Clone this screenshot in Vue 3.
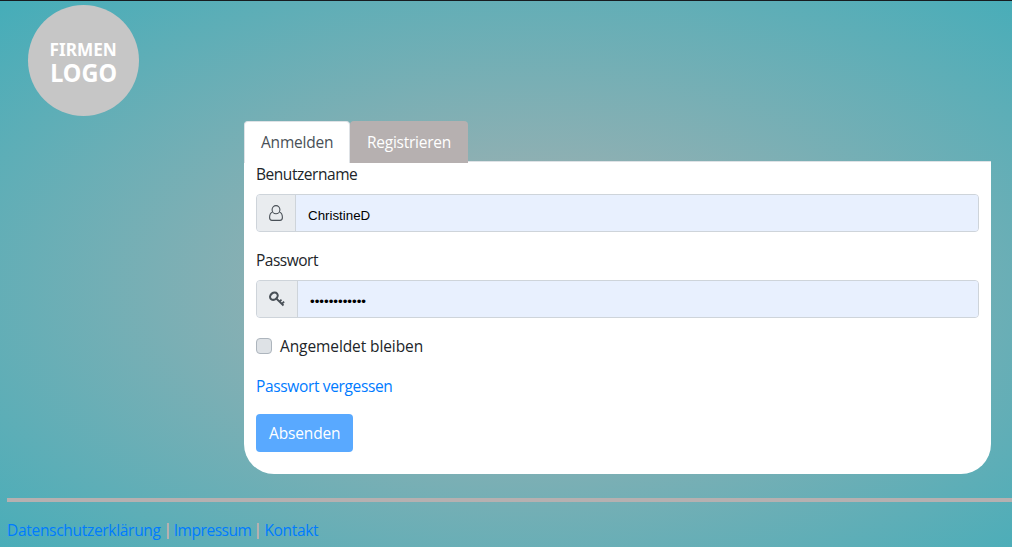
<script setup>
import { ref } from 'vue'

const username = ref('ChristineD')
const password = ref('geheim123456')
const stay = ref(false)
</script>

<template>
  <div class="page">
    <header>
      <div class="logo">
        <span class="logo-top">FIRMEN</span>
        <span class="logo-bottom">LOGO</span>
      </div>
    </header>
    <main>
      <nav class="tabs">
        <a class="tab active"><span class="t-anm">Anmelden</span></a>
        <a class="tab other"><span class="t-reg">Registrieren</span></a>
      </nav>
      <form class="card" @submit.prevent>
        <label class="t-user" for="user">Benutzername</label>
        <div class="group">
          <span class="addon user">
            <svg width="14" height="16" viewBox="0 0 14 16" fill="none" stroke="#495057" stroke-width="1.1">
              <path d="M3.300 7.200C1.400 7.800.6 10 .6 12.600c0 1.600 1 2.800 2.400 2.800h8c1.400 0 2.400-1.200 2.400-2.800 0-2.600-.8-4.800-2.700-5.400" />
              <ellipse cx="7" cy="4.700" rx="3.900" ry="4.100" />
            </svg>
          </span>
          <input id="user" v-model="username" type="text" />
        </div>
        <label class="t-pass" for="pass">Passwort</label>
        <div class="group">
          <span class="addon key">
            <svg width="16" height="16" viewBox="0 0 16 16" fill="none" stroke="#495057">
              <ellipse cx="4.900" cy="5.200" rx="4.100" ry="3.300" stroke-width="2.100" transform="rotate(-40 4.900 5.200)" />
              <path d="M7.300 7.500l7.200 7M10.300 10.800l2.200-2.200M12.600 13.100l2.500-2.500" stroke-width="1.800" />
            </svg>
          </span>
          <input id="pass" v-model="password" class="secret" type="password" />
        </div>
        <label class="check">
          <input v-model="stay" type="checkbox" />
          <span class="t-stay">Angemeldet bleiben</span>
        </label>
        <a class="forgot"><span class="t-forgot">Passwort vergessen</span></a>
        <button type="submit"><span class="t-send">Absenden</span></button>
      </form>
    </main>
    <footer>
      <a class="t-data">Datenschutzerklärung</a><i></i><a class="t-imp">Impressum</a><i></i><a class="t-kon">Kontakt</a>
    </footer>
  </div>
</template>

<style>
body { margin: 0; overflow: hidden; }
</style>

<style scoped>
* { box-sizing: border-box; }
.page {
  height: 547px;
  overflow: hidden;
  border-top: 1px solid #171c20;
  background: radial-gradient(ellipse at 52% 52%, #aeb1b0 0%, #45adb9 100%);
  font: 15.5px/24px "Open Sans", "Noto Sans", sans-serif;
  color: #212529;
}
header { height: 120px; padding: 4px 0 0 28px; }
.logo {
  width: 111px;
  height: 111px;
  border-radius: 50%;
  background: #c6c6c6;
  color: #fff;
  font-family: "Noto Sans", sans-serif;
  font-weight: 700;
  display: flex;
  flex-direction: column;
  align-items: center;
  padding-top: 33px;
}
.logo span { white-space: nowrap; }
.logo-top { font-size: 18.500px; line-height: 21px; transform: scaleX(.93); }
.logo-bottom { font-size: 25px; line-height: 27px; transform: scaleX(.94); }
main { width: 747px; margin-left: 244px; }
.tabs { display: flex; height: 42px; position: relative; z-index: 1; }
.tab {
  height: 42px;
  padding: 9px 0 0 17px;
  border-radius: 4px 4px 0 0;
}
.active { width: 106px; background: #fff; color: #495057; border: 1px solid #dee2e6; border-bottom: 0; padding: 8px 0 0 16px; }
.other { width: 118px; background: #b6b0b0; color: #fff; }
.card {
  height: 313px;
  margin-top: -2px;
  padding: 0 12px;
  background: #fff;
  border-top: 1px solid #dee2e6;
  border-radius: 0 0 30px 30px;
  display: flex;
  flex-direction: column;
  align-items: flex-start;
}
.card > label { white-space: nowrap; }
.group {
  display: flex;
  width: 723px;
  height: 38px;
  margin: 8px 0 16px;
  border: 1px solid #ced4da;
  border-radius: 4px;
  overflow: hidden;
  background: #e8f0fe;
}
.addon {
  display: flex;
  align-items: center;
  padding-left: 12px;
  background: #e9ecef;
  border-right: 1px solid #ced4da;
}
.addon svg { display: block; }
.user { width: 39px; }
.key { width: 41px; }
.group input {
  flex: 1;
  border: 0;
  outline: 0;
  padding: 5px 12px 0;
  background: #e8f0fe;
  color: #000;
  font: 13.333px "Liberation Sans", Arial, sans-serif;
}
.group .secret { padding-top: 4px; }
.check { display: flex; align-items: center; gap: 8px; }
.check input {
  appearance: none;
  width: 16px;
  height: 16px;
  margin: 0;
  border: 1px solid #adb5bd;
  border-radius: 4px;
  background: #dee2e6;
}
.forgot { margin-top: 16px; color: #007bff; }
button {
  width: 97px;
  height: 38px;
  margin-top: 16px;
  padding: 0 0 0 13px;
  border: 0;
  border-radius: 4px;
  background: #59a9ff;
  color: #fff;
  font: inherit;
  text-align: left;
}
footer {
  margin: 24px 0 0 7px;
  padding-top: 16px;
  border-top: 4px solid #b6b0b0;
  display: flex;
  align-items: center;
  color: #007bff;
}
footer i { width: 2px; height: 16px; margin: 2px 5px 0 6px; background: #b6b0b0; }
.t-anm { letter-spacing: -.2px; }
.t-reg { letter-spacing: -.25px; }
.t-user { letter-spacing: -.45px; }
.t-pass { letter-spacing: -.5px; }
.t-stay { letter-spacing: -.1px; }
.t-forgot { letter-spacing: -.35px; }
.t-send { letter-spacing: -.15px; }
.t-data { letter-spacing: -.3px; }
.t-imp { letter-spacing: -.45px; }
.t-kon { letter-spacing: -.35px; }
</style>
